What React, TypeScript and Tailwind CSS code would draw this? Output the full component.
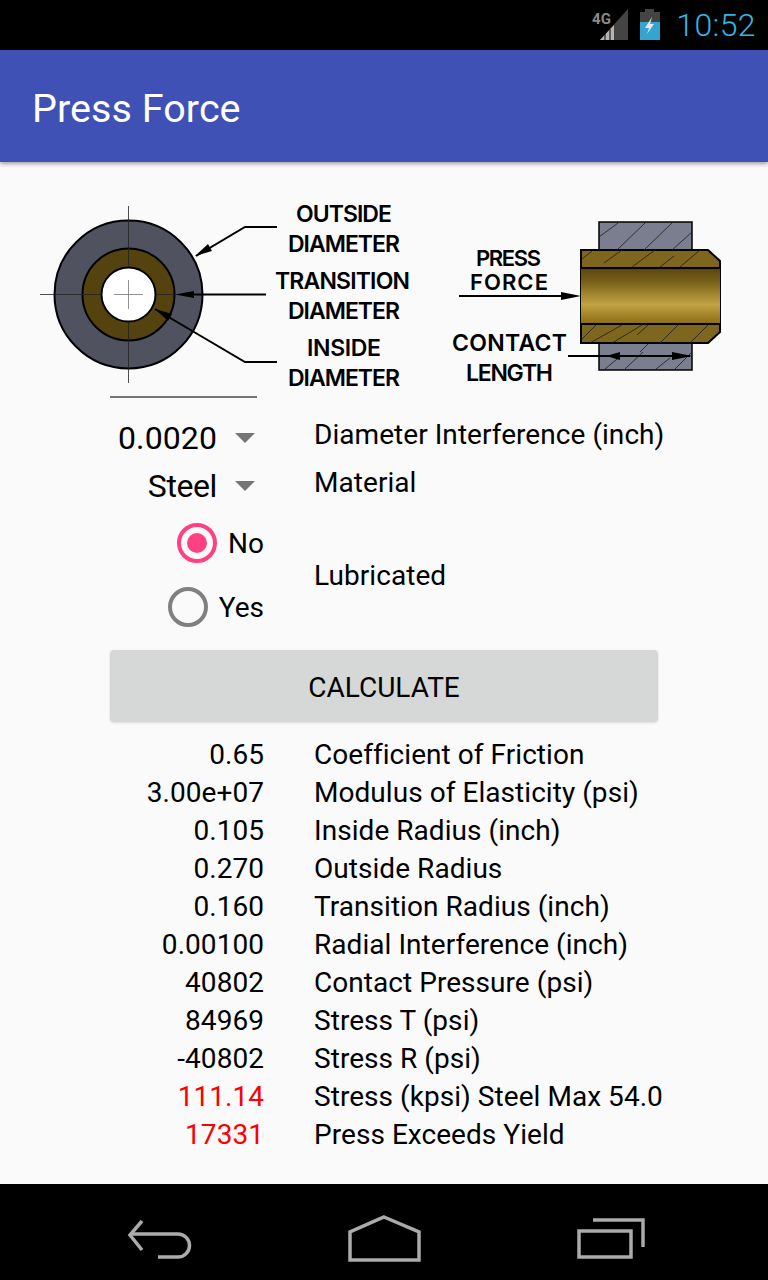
const results = [
  { value: "0.65", label: "Coefficient of Friction" },
  { value: "3.00e+07", label: "Modulus of Elasticity (psi)" },
  { value: "0.105", label: "Inside Radius (inch)" },
  { value: "0.270", label: "Outside Radius" },
  { value: "0.160", label: "Transition Radius (inch)" },
  { value: "0.00100", label: "Radial Interference (inch)" },
  { value: "40802", label: "Contact Pressure (psi)" },
  { value: "84969", label: "Stress T (psi)" },
  { value: "-40802", label: "Stress R (psi)" },
  { value: "111.14", label: "Stress (kpsi) Steel Max 54.0", red: true },
  { value: "17331", label: "Press Exceeds Yield", red: true },
];

function StatusBar() {
  return (
    <div className="h-[50px] bg-black flex items-center justify-end pr-[12px]">
      <svg width="70" height="50" viewBox="0 0 70 50" className="mr-[3px]">
        <polygon points="34,40 62,9 62,40" fill="#444444" />
        <polygon points="34,40 48,25 48,40" fill="#b4b4b4" />
        <line x1="39" y1="34" x2="39" y2="40" stroke="#000" strokeWidth="1" />
        <line x1="44" y1="29" x2="44" y2="40" stroke="#000" strokeWidth="1" />
        <text x="26" y="24" fontSize="15" fontWeight="700" fill="#8a8a8a" fontFamily="Roboto, sans-serif">4G</text>
      </svg>
      <svg width="22" height="50" viewBox="0 0 22 50" className="mr-[15px]">
        <rect x="6" y="9" width="9" height="3" fill="#444444" />
        <rect x="1" y="12" width="20" height="10" fill="#444444" />
        <rect x="1" y="22" width="20" height="18" fill="#33a5d0" />
        <polygon points="13,17 6,28 10,28 8,34 15,24 11,24" fill="#e8e8e8" />
      </svg>
      <span className="text-[32px] leading-[50px] tracking-[0.4px] text-[#33b5e5] font-light">10:52</span>
    </div>
  );
}

function AppBar() {
  return (
    <div className="relative z-10 h-[112px] bg-[#3f51b5] flex items-center pl-[32px] pt-[5px] shadow-[0_2px_4px_rgba(0,0,0,0.35)]">
      <h1 className="text-[39.5px] text-white">Press Force</h1>
    </div>
  );
}

function Diagram() {
  return (
    <svg width="768" height="204" viewBox="0 190 768 204" className="block mt-[28px]">
      <defs>
        <linearGradient id="bore" x1="0" y1="0" x2="0" y2="1">
          <stop offset="0" stopColor="#574410" />
          <stop offset="0.25" stopColor="#7a6118" />
          <stop offset="0.65" stopColor="#c2a343" />
          <stop offset="1" stopColor="#8a6d14" />
        </linearGradient>
      </defs>

      {/* end view */}
      <circle cx="128.5" cy="294.5" r="74" fill="#50525f" stroke="#000" strokeWidth="2" />
      <circle cx="128.5" cy="294.5" r="46" fill="#54430f" stroke="#000" strokeWidth="2" />
      <circle cx="128.5" cy="294.5" r="27" fill="#fff" stroke="#000" strokeWidth="2" />
      <g stroke="#222" strokeWidth="0.8">
        <line x1="128.5" y1="206" x2="128.5" y2="267" />
        <line x1="128.5" y1="322" x2="128.5" y2="383" />
        <line x1="40" y1="294.5" x2="101" y2="294.5" />
        <line x1="156" y1="294.5" x2="176" y2="294.5" />
      </g>
      <g stroke="#777" strokeWidth="0.8">
        <line x1="114" y1="294.5" x2="143" y2="294.5" />
        <line x1="128.5" y1="280" x2="128.5" y2="309" />
      </g>
      <g stroke="#000" fill="none" strokeWidth="2">
        <polyline points="277,227 245,227 196,256" />
        <line x1="266" y1="294.5" x2="190" y2="294.5" />
        <polyline points="277,362 245,362 155,309" />
      </g>
      <polygon points="195,256 208,244 212,251" fill="#000" />
      <polygon points="175,294.5 194,291 194,298" fill="#000" />
      <polygon points="155,309 172,314 168,321" fill="#000" />

      <g fontFamily="Inter, sans-serif" fontWeight="600" fontSize="23" fill="#000">
        <text x="296" y="222" textLength="96" lengthAdjust="spacing">OUTSIDE</text>
        <text x="288" y="252" textLength="112" lengthAdjust="spacing">DIAMETER</text>
        <text x="275" y="289" textLength="135" lengthAdjust="spacing">TRANSITION</text>
        <text x="288" y="319" textLength="112" lengthAdjust="spacing">DIAMETER</text>
        <text x="307" y="356" textLength="74" lengthAdjust="spacing">INSIDE</text>
        <text x="288" y="386" textLength="112" lengthAdjust="spacing">DIAMETER</text>
        <text x="476" y="266" fontSize="22" textLength="65" lengthAdjust="spacing">PRESS</text>
        <text x="470" y="290" fontSize="22" textLength="78" lengthAdjust="spacing">FORCE</text>
        <text x="452" y="351" textLength="115" lengthAdjust="spacing">CONTACT</text>
        <text x="466" y="381" textLength="87" lengthAdjust="spacing">LENGTH</text>
      </g>

      {/* section view */}
      <rect x="599" y="222" width="93" height="28" fill="#7a7e8e" stroke="#000" strokeWidth="1.5" />
      <rect x="599" y="343" width="93" height="27" fill="#7a7e8e" stroke="#000" strokeWidth="1.5" />
      <polygon points="581,250 708,250 720,261 720,332 708,343 581,343" fill="#7e661e" stroke="#000" strokeWidth="2" />
      <rect x="581" y="268" width="139" height="56" fill="url(#bore)" />
      <g stroke="#000" strokeWidth="2">
        <line x1="581" y1="268" x2="720" y2="268" />
        <line x1="581" y1="324" x2="720" y2="324" />
      </g>
      <g stroke="#1c1c1c" strokeWidth="0.8">
        <line x1="599" y1="237" x2="618" y2="223" />
        <line x1="617" y1="250" x2="645" y2="223" />
        <line x1="644" y1="250" x2="672" y2="223" />
        <line x1="672" y1="250" x2="692" y2="232" />
        <line x1="582" y1="259" x2="592" y2="251" />
        <line x1="604" y1="263" x2="622" y2="250" />
        <line x1="632" y1="267" x2="655" y2="250" />
        <line x1="660" y1="267" x2="674" y2="256" />
        <line x1="680" y1="267" x2="700" y2="250" />
        <line x1="582" y1="339" x2="596" y2="325" />
        <line x1="590" y1="343" x2="622" y2="325" />
        <line x1="612" y1="343" x2="642" y2="325" />
        <line x1="637" y1="335" x2="648" y2="325" />
        <line x1="660" y1="343" x2="678" y2="325" />
        <line x1="690" y1="343" x2="708" y2="325" />
        <line x1="605" y1="369" x2="622" y2="355" />
        <line x1="625" y1="369" x2="643" y2="352" />
        <line x1="656" y1="369" x2="670" y2="358" />
        <line x1="648" y1="344" x2="640" y2="352" />
        <line x1="675" y1="369" x2="692" y2="352" />
      </g>
      <g stroke="#000" strokeWidth="2">
        <line x1="459" y1="296" x2="570" y2="296" />
        <line x1="568" y1="356" x2="690" y2="356" />
      </g>
      <polygon points="581,296 561,292 561,300" fill="#000" />
      <polygon points="606,356 620,352 620,360" fill="#000" />
      <polygon points="692,356 672,352 672,360" fill="#000" />
    </svg>
  );
}

function Spinner({ value, label, valueClass }: { value: string; label: string; valueClass: string }) {
  return (
    <div className="flex h-[48px]">
      <div className="w-[264px] flex items-center justify-end pr-[9px]">
        <span className={valueClass}>{value}</span>
        <span className="ml-[18px] w-0 h-0 border-x-[10px] border-x-transparent border-t-[10px] border-t-[#757575]" />
      </div>
      <div className="ml-[50px] pt-[2px] text-[28px] leading-[38px] text-black">{label}</div>
    </div>
  );
}

function Radio({ label, checked }: { label: string; checked?: boolean }) {
  return (
    <div className="h-[64px] flex items-center justify-end">
      <span
        className={
          checked
            ? "w-[40px] h-[40px] rounded-full border-[4px] border-[#ff4081] flex items-center justify-center"
            : "w-[40px] h-[40px] rounded-full border-[4px] border-[#808080]"
        }
      >
        {checked && <span className="w-[20px] h-[20px] rounded-full bg-[#ff4081]" />}
      </span>
      <span className="ml-[11px] pt-[2px] text-[28px] tracking-normal text-black">{label}</span>
    </div>
  );
}

function NavBar() {
  return (
    <div className="h-[96px] bg-black flex items-center justify-between pl-[127px] pr-[123px] pt-[14px]">
      <svg width="67" height="44" viewBox="0 0 67 44" fill="none" stroke="#ababab" strokeWidth="3.5">
        <polyline points="15,4 3,18 15,33" />
        <path d="M3 18 H51 A11 11 0 0 1 51 41 H31" transform="translate(0,-1)" />
      </svg>
      <svg width="74" height="48" viewBox="0 0 74 48" fill="none" stroke="#ababab" strokeWidth="3.5" className="mr-[4px]">
        <polygon points="37,2 72,17 72,45 3,45 3,17" />
      </svg>
      <svg width="68" height="42" viewBox="0 0 68 42" fill="none" stroke="#ababab" strokeWidth="3.5">
        <rect x="2" y="13" width="52" height="26" />
        <polyline points="16,2 66,2 66,29" />
      </svg>
    </div>
  );
}

export default function App() {
  return (
    <div className="w-[768px] h-[1280px] flex flex-col bg-[#fafafa] font-['Roboto',sans-serif] tracking-[0.05px] overflow-hidden">
      <StatusBar />
      <AppBar />

      <div className="flex-1">
        <Diagram />
        <div className="ml-[110px] mt-[2px] w-[147px] h-[2px] bg-[#757575]" />

        <div className="mt-[16px]">
          <Spinner value="0.0020" label="Diameter Interference (inch)" valueClass="text-[32px] tracking-[0.1px] text-black" />
          <Spinner value="Steel" label="Material" valueClass="text-[32px] tracking-[-0.4px] text-black" />
        </div>

        <div className="flex mt-[1px]">
          <div className="w-[264px] flex flex-col">
            <Radio label="No" checked />
            <Radio label="Yes" />
          </div>
          <div className="ml-[50px] pt-[2px] flex items-center text-[28px] text-black">Lubricated</div>
        </div>

        <button className="block ml-[110px] mt-[11px] pt-[4px] w-[548px] h-[72px] rounded-[4px] bg-[#d6d7d7] text-[28px] tracking-normal text-black shadow-sm">
          CALCULATE
        </button>

        <div className="mt-[14px]">
          {results.map((row) => (
            <div key={row.label} className="flex h-[38px] text-[28px] leading-[38px]">
              <div className={row.red ? "w-[264px] text-right text-[#ff0000]" : "w-[264px] text-right text-black"}>{row.value}</div>
              <div className="ml-[50px] text-black">{row.label}</div>
            </div>
          ))}
        </div>
      </div>

      <NavBar />
    </div>
  );
}
